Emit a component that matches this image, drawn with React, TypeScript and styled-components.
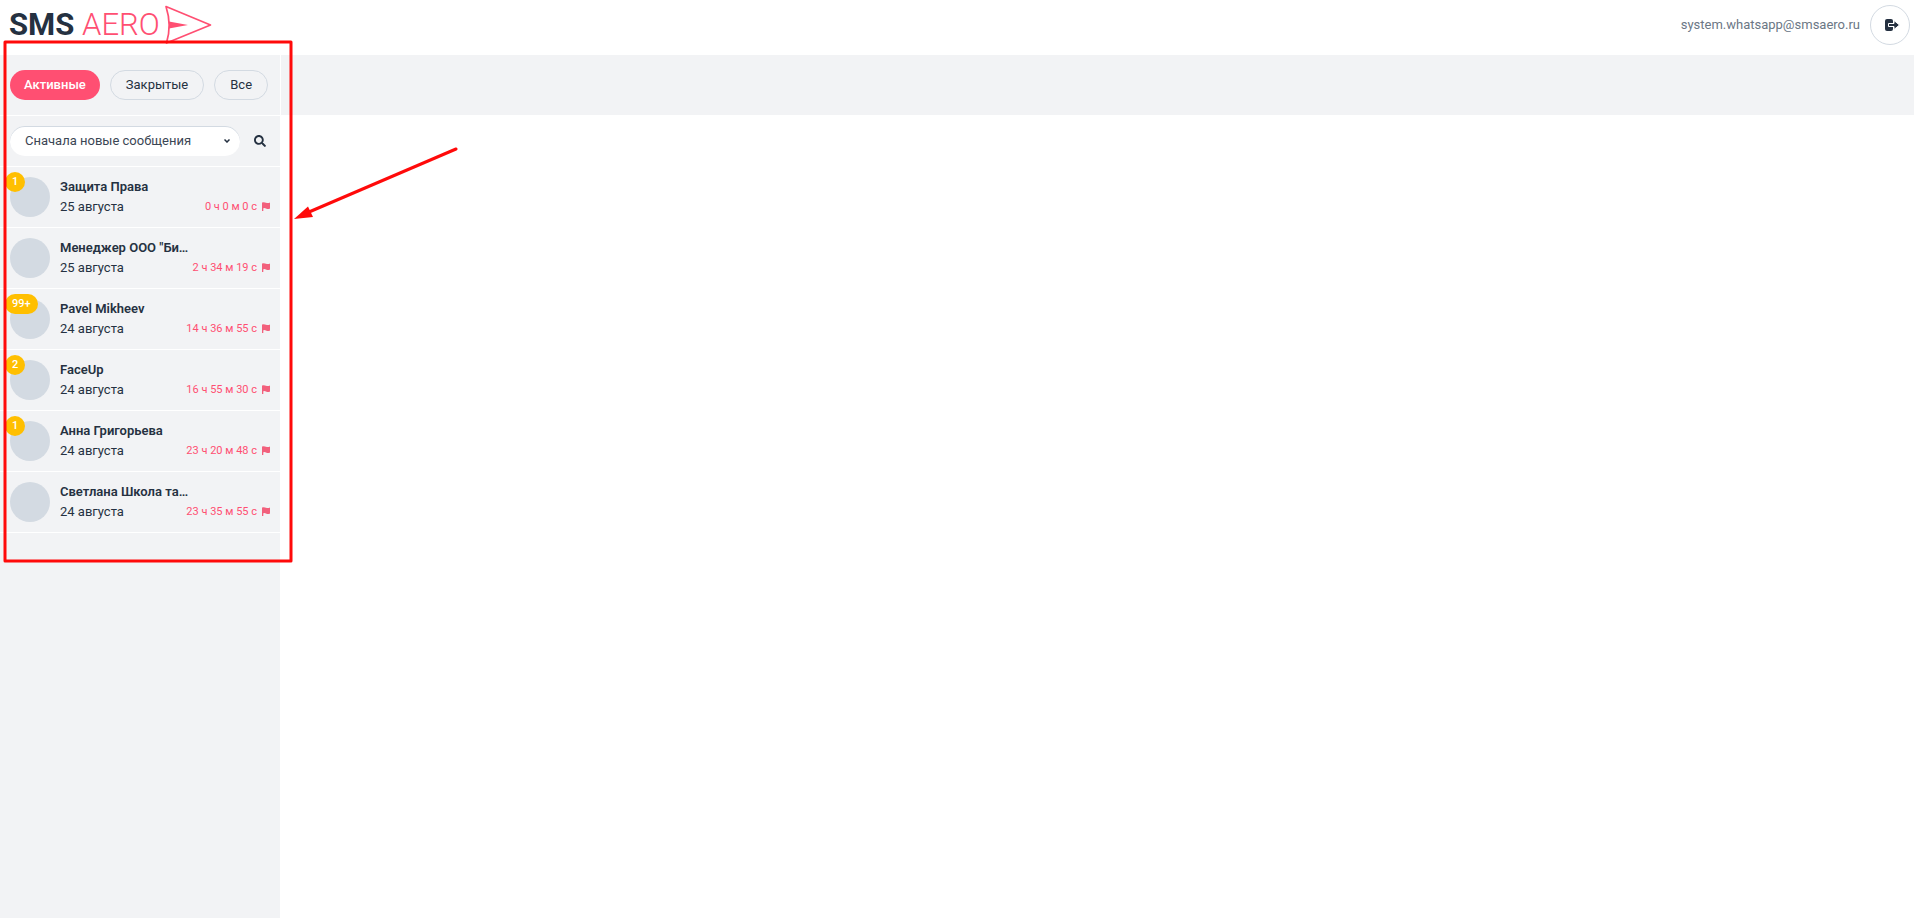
import React from "react";
import styled, { createGlobalStyle } from "styled-components";
import { FaSearch } from "react-icons/fa";

const GlobalStyle = createGlobalStyle`
  *, *::before, *::after { box-sizing: border-box; }
  body { margin: 0; background: #fff; color: #253141; font: 13px/20px Roboto, "Noto Sans", sans-serif; }
  button, select { font: inherit; color: inherit; }
`;

const Page = styled.div`
  position: relative;
  display: flex;
  flex-direction: column;
  min-height: 100vh;
`;

const Header = styled.header`
  display: flex;
  align-items: center;
  justify-content: space-between;
  height: 55px;
  padding: 0 4px 6px 9px;
`;

const Logo = styled.a`
  display: flex;
  align-items: center;
  color: #253141;
  font-size: 31px;
  line-height: 40px;
  font-weight: 700;
  text-decoration: none;
  white-space: pre;
`;

const LogoAccent = styled.span`
  color: #ff4f72;
  font-weight: 300;
`;

const Plane = styled.svg`
  width: 48px;
  height: 40px;
  margin-left: 4px;
`;

const Account = styled.div`
  display: flex;
  align-items: center;
  gap: 10px;
  color: #6b7785;
`;

const LogoutButton = styled.button`
  display: flex;
  align-items: center;
  justify-content: center;
  width: 40px;
  height: 40px;
  padding: 0 0 0 3px;
  border: 1px solid #d3dae2;
  border-radius: 50%;
  background: #fff;
  color: #253141;
`;

const Body = styled.div`
  display: flex;
  flex: 1;
`;

const Sidebar = styled.aside`
  width: 280px;
  flex: none;
  background: #f2f3f5;
`;

const Tabs = styled.nav`
  display: flex;
  align-items: center;
  gap: 10px;
  height: 61px;
  padding: 0 10px;
  border-bottom: 1px solid #fff;
`;

const Tab = styled.button<{ $active?: boolean }>`
  height: 30px;
  padding: ${(p) => (p.$active ? "0 14px" : "0 15px")};
  border: ${(p) => (p.$active ? "0" : "1px solid #d3dae2")};
  border-radius: 15px;
  background: ${(p) => (p.$active ? "#ff4f72" : "transparent")};
  color: ${(p) => (p.$active ? "#fff" : "#253141")};
  font-weight: ${(p) => (p.$active ? 500 : 400)};
`;

const Filter = styled.div`
  display: flex;
  align-items: center;
  height: 51px;
  padding-left: 10px;
  border-bottom: 1px solid #fff;
`;

const SortField = styled.div`
  display: grid;
  align-items: center;
  flex: 1;
  > * { grid-area: 1 / 1; }
`;

const Sort = styled.select`
  appearance: none;
  width: 100%;
  height: 30px;
  padding: 0 30px 0 15px;
  border: 0;
  border-radius: 15px;
  background: #fff;
  box-shadow: inset 0 1px 0 #d3dae2;
  color: #3b4654;
`;

const Chevron = styled.svg`
  justify-self: end;
  width: 6px;
  height: 4px;
  margin-right: 10px;
  pointer-events: none;
`;

const SearchButton = styled.button`
  display: flex;
  align-items: center;
  justify-content: center;
  width: 40px;
  height: 30px;
  padding: 0;
  border: 0;
  background: none;
  font-size: 12px;
`;

const ChatList = styled.ul`
  margin: 0;
  padding: 0;
  list-style: none;
`;

const Chat = styled.li`
  display: flex;
  gap: 10px;
  padding: 10px;
  border-bottom: 1px solid #fff;
`;

const Avatar = styled.div`
  position: relative;
  width: 40px;
  height: 40px;
  border-radius: 50%;
  background: #d3dae2;
`;

const Badge = styled.span`
  position: absolute;
  top: -5px;
  left: -5px;
  min-width: 20px;
  height: 20px;
  padding: 0 7px;
  border-radius: 10px;
  background: #ffbf00;
  color: #fff;
  font-size: 11px;
  line-height: 19px;
  font-weight: 500;
  text-align: center;
`;

const Info = styled.div`
  flex: 1;
  min-width: 0;
`;

const Name = styled.div`
  font-weight: 600;
  white-space: nowrap;
`;

const Meta = styled.div`
  display: flex;
  justify-content: space-between;
`;

const Timer = styled.span`
  display: flex;
  align-items: center;
  gap: 5px;
  color: #ff4f72;
  font-size: 11px;
`;

const Main = styled.main`
  flex: 1;
  margin-left: 1px;
`;

const ChatHeader = styled.div`
  height: 60px;
  background: #f2f3f5;
`;

const Annotation = styled.svg`
  position: absolute;
  top: 0;
  left: 0;
  width: 470px;
  height: 580px;
  pointer-events: none;
`;

const chats = [
  { name: "Защита Права", date: "25 августа", time: "0 ч 0 м 0 с", unread: "1" },
  { name: "Менеджер ООО \"Би…", date: "25 августа", time: "2 ч 34 м 19 с" },
  { name: "Pavel Mikheev", date: "24 августа", time: "14 ч 36 м 55 с", unread: "99+" },
  { name: "FaceUp", date: "24 августа", time: "16 ч 55 м 30 с", unread: "2" },
  { name: "Анна Григорьева", date: "24 августа", time: "23 ч 20 м 48 с", unread: "1" },
  { name: "Светлана Школа та…", date: "24 августа", time: "23 ч 35 м 55 с" },
];

const Flag = () => (
  <svg width="8" height="10" viewBox="0 0 8 10" fill="#f2607c" aria-hidden="true">
    <path d="M0 0.500Q2-0.300 4 0.700Q6 1.600 8 0.500V6.500Q6 7.500 4 6.500Q2.500 5.800 1.300 6.300V9H0Z" />
  </svg>
);

export default function App() {
  return (
    <>
      <GlobalStyle />
      <Page>
        <Header>
          <Logo href="#">
            SMS <LogoAccent>AERO</LogoAccent>
            <Plane viewBox="163 4 48 40" fill="none" aria-hidden="true">
              <path d="M165 5.500L209.500 24L165.500 42Q171 24 165 5.500Z" stroke="#ff4f72" strokeWidth="1.700" strokeLinejoin="round" />
              <path d="M168 20.500L187 24L168 27.500Z" fill="#ff4f72" />
            </Plane>
          </Logo>
          <Account>
            <span>system.whatsapp@smsaero.ru</span>
            <LogoutButton aria-label="Выйти">
              <svg width="16" height="14" viewBox="0 0 16 14" aria-hidden="true">
                <rect x="1" y="1" width="8" height="12" rx="2" fill="currentColor" />
                <path d="M4.500 5.500H10V2.500L15.500 7L10 11.500V8.500H4.500Z" fill="currentColor" stroke="#fff" strokeWidth="1" />
              </svg>
            </LogoutButton>
          </Account>
        </Header>
        <Body>
          <Sidebar>
            <Tabs>
              <Tab $active>Активные</Tab>
              <Tab>Закрытые</Tab>
              <Tab>Все</Tab>
            </Tabs>
            <Filter>
              <SortField>
                <Sort aria-label="Сортировка">
                  <option>Сначала новые сообщения</option>
                </Sort>
                <Chevron viewBox="0 0 6 4" fill="none" stroke="#253141" strokeWidth="1.500">
                  <path d="M0.500 0.500L3 3L5.500 0.500" />
                </Chevron>
              </SortField>
              <SearchButton aria-label="Поиск"><FaSearch /></SearchButton>
            </Filter>
            <ChatList>
              {chats.map((chat) => (
                <Chat key={chat.name}>
                  <Avatar>{chat.unread && <Badge>{chat.unread}</Badge>}</Avatar>
                  <Info>
                    <Name>{chat.name}</Name>
                    <Meta>
                      <span>{chat.date}</span>
                      <Timer>{chat.time}<Flag /></Timer>
                    </Meta>
                  </Info>
                </Chat>
              ))}
            </ChatList>
          </Sidebar>
          <Main>
            <ChatHeader />
          </Main>
        </Body>
        <Annotation viewBox="0 0 470 580" aria-hidden="true">
          <rect x="5" y="42" width="286" height="519" fill="none" stroke="#ff0a0a" strokeWidth="3" strokeLinejoin="round" />
          <path d="M456 149L309 212" stroke="#ff0a0a" strokeWidth="3" strokeLinecap="round" />
          <path d="M294 219L308 206.500L313 217Z" fill="#ff0a0a" />
        </Annotation>
      </Page>
    </>
  );
}
